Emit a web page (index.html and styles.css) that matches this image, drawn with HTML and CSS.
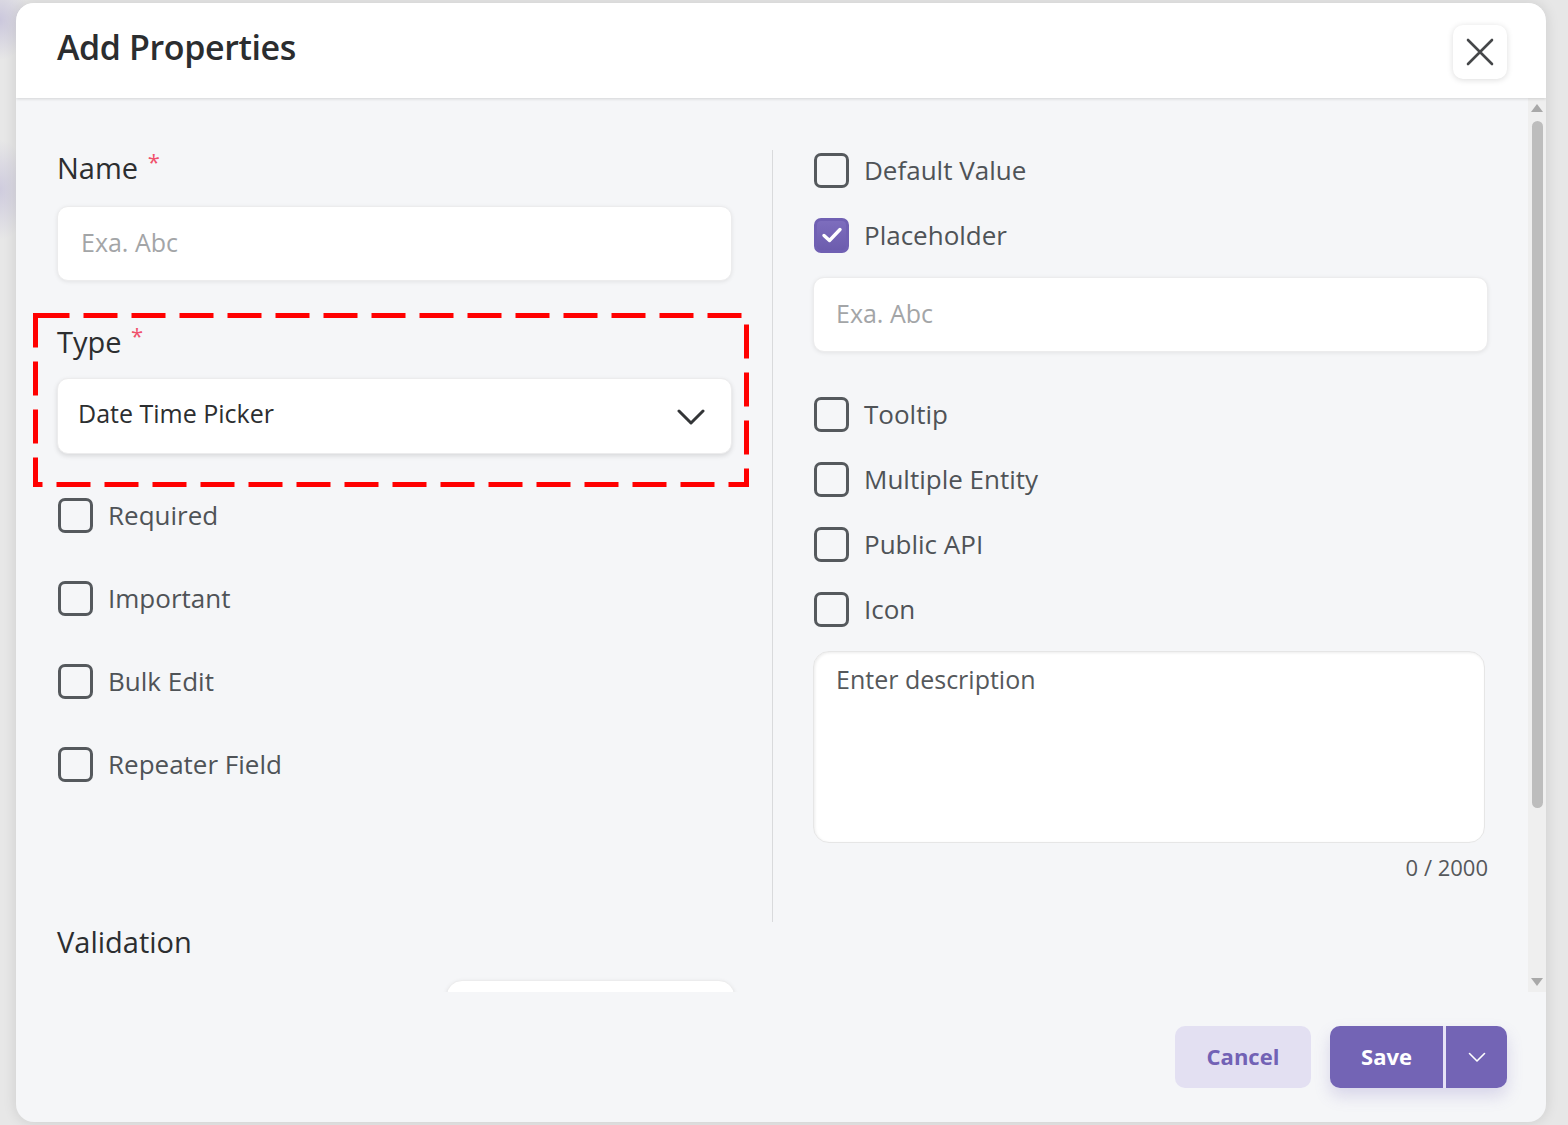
FILE: index.html
```html
<!DOCTYPE html>
<html lang="en">
<head>
  <meta charset="UTF-8" />
  <meta name="viewport" content="width=device-width, initial-scale=1" />
  <title>Add Properties</title>
  <link rel="stylesheet" href="styles.css">
</head>
<body>

  <div class="modal">
    <div class="modal-header">
      <h1 class="modal-title">Add Properties</h1>
      <button class="btn-close" aria-label="Close">
        <svg width="28" height="28" viewBox="0 0 28 28">
          <path d="M2 2 L26 26 M26 2 L2 26" stroke="#454749" stroke-width="2.6" stroke-linecap="round" fill="none"/>
        </svg>
      </button>
    </div>

    <div class="modal-body">
      <div class="body-content">
        <div class="form-grid">

          <!-- left column -->
          <div class="col">
            <label class="field-label">Name <span class="req">*</span></label>
            <div class="input placeholder">Exa. Abc</div>

            <div class="type-group">
              <label class="field-label">Type <span class="req">*</span></label>
              <div class="input select">
                <span>Date Time Picker</span>
                <svg width="28" height="17" viewBox="0 0 28 17">
                  <path d="M2 2 L14 14 L26 2" stroke="#333537" stroke-width="3" stroke-linecap="round" stroke-linejoin="round" fill="none"/>
                </svg>
              </div>
              <svg class="highlight" width="716" height="174" viewBox="0 0 716 174">
                <rect x="2.5" y="2.5" width="711" height="169" fill="none" stroke="#ff0000" stroke-width="5" stroke-dasharray="34 14"/>
              </svg>
            </div>

            <div class="check-list left-checks">
              <div class="check"><span class="box"></span>Required</div>
              <div class="check"><span class="box"></span>Important</div>
              <div class="check"><span class="box"></span>Bulk Edit</div>
              <div class="check"><span class="box"></span>Repeater Field</div>
            </div>
          </div>

          <div class="divider"></div>

          <!-- right column -->
          <div class="col">
            <div class="check"><span class="box"></span>Default Value</div>
            <div class="check check-gap">
              <span class="box checked">
                <svg width="22" height="18" viewBox="0 0 22 18">
                  <path d="M3 9.5 L8.5 14.5 L19 3.5" stroke="#fff" stroke-width="3.4" stroke-linecap="round" stroke-linejoin="round" fill="none"/>
                </svg>
              </span>Placeholder
            </div>
            <div class="input placeholder input-right">Exa. Abc</div>

            <div class="check tooltip-row"><span class="box"></span>Tooltip</div>
            <div class="check check-gap"><span class="box"></span>Multiple Entity</div>
            <div class="check check-gap"><span class="box"></span>Public API</div>
            <div class="check check-gap"><span class="box"></span>Icon</div>

            <div class="textarea">Enter description</div>
            <div class="counter">0 / 2000</div>
          </div>
        </div>

        <div class="validation">
          <h2 class="field-label">Validation</h2>
          <div class="validation-row">
            <div class="input small-select"></div>
          </div>
        </div>
      </div>

      <div class="scrollbar">
        <span class="sb-up"></span>
        <span class="sb-thumb"></span>
        <span class="sb-fill"></span>
        <span class="sb-down"></span>
      </div>
    </div>

    <div class="modal-footer">
      <button class="btn-cancel">Cancel</button>
      <div class="btn-split">
        <button class="btn-save">Save</button>
        <button class="btn-more" aria-label="More">
          <svg width="18" height="11" viewBox="0 0 18 11">
            <path d="M1.5 1.5 L9 9 L16.5 1.5" stroke="#fff" stroke-width="1.6" stroke-linecap="round" stroke-linejoin="round" fill="none"/>
          </svg>
        </button>
      </div>
    </div>
  </div>

</body>
</html>
```

FILE: styles.css
```css
/* Baseline */
* {
  margin: 0;
  padding: 0;
  box-sizing: border-box;
  font-family: 'Open Sans', 'Noto Sans', sans-serif;
}
body {
  height: 100vh;
  overflow: hidden;
  background:
    radial-gradient(ellipse 30px 40px at 0 20px, rgba(150,140,200,0.35), transparent),
    radial-gradient(ellipse 30px 50px at 0 190px, rgba(150,140,200,0.3), transparent),
    #e7e7e7;
}

/* Modal box */
.modal {
  margin: 3px 0 0 16px;
  width: 1530px;
  height: 1119px;
  background: #f5f6f8;
  border-radius: 18px;
  overflow: hidden;
  display: flex;
  flex-direction: column;
  box-shadow: 0 0 14px rgba(0,0,0,0.12);
}

.modal-header {
  height: 95px;
  flex-shrink: 0;
  background: #fff;
  display: flex;
  align-items: center;
  justify-content: space-between;
  padding: 0 39px 0 41px;
  box-shadow: 0 1px 3px rgba(0,0,0,0.14);
  position: relative;
  z-index: 1;
}
.modal-title {
  font-size: 34px;
  font-weight: 600;
  color: #2b2d2f;
  letter-spacing: -0.4px;
  margin-bottom: 8px;
}
.btn-close {
  width: 54px;
  height: 54px;
  border: none;
  border-radius: 10px;
  background: #fff;
  box-shadow: 0 1px 6px rgba(0,0,0,0.14);
  display: flex;
  align-items: center;
  justify-content: center;
  margin-top: 2px;
}

/* Body + scrollbar */
.modal-body {
  flex: 1;
  display: flex;
  overflow: hidden;
}
.body-content {
  flex: 1;
  padding: 52px 40px 0 41px;
}

.form-grid {
  display: grid;
  grid-template-columns: 675px 1px 675px;
  column-gap: 40px;
}
.col {
  display: flex;
  flex-direction: column;
  padding-bottom: 43px;
}
.divider {
  background: #d9dadc;
}

.field-label {
  display: block;
  font-size: 29px;
  font-weight: 500;
  line-height: 36px;
  color: #2c2e30;
  margin-bottom: 20px;
}
.req {
  color: #f0506c;
  font-size: 22px;
  vertical-align: top;
  line-height: 22px;
  margin-left: 2px;
}

.input {
  height: 75px;
  background: #fff;
  border: 1px solid #ececed;
  border-radius: 11px;
  box-shadow: 0 1px 4px rgba(0,0,0,0.08);
  display: flex;
  align-items: center;
  padding: 0 0 4px 23px;
  font-size: 25px;
  color: #2c2e30;
}
.placeholder {
  color: #a3a5a7;
}

.type-group {
  position: relative;
  margin-top: 43px;
}
.type-group .field-label {
  margin-bottom: 18px;
}
.select {
  height: 76px;
  justify-content: space-between;
  padding: 0 26px 6px 20px;
  box-shadow: 0 2px 5px rgba(0,0,0,0.12);
}
.select svg {
  margin-top: 8px;
}
/* red dashed annotation round the type field */
.highlight {
  position: absolute;
  left: -24px;
  top: -11px;
}

/* Checkboxes */
.check-list {
  display: flex;
  flex-direction: column;
  gap: 43px;
}
.left-checks {
  margin-top: 41px;
}
.check {
  height: 40px;
  display: flex;
  align-items: center;
  gap: 15px;
  font-size: 26px;
  font-weight: 500;
  color: #4f5357;
}
.box {
  width: 35px;
  height: 35px;
  border: 3px solid #55595d;
  border-radius: 7px;
  display: flex;
  align-items: center;
  justify-content: center;
  flex-shrink: 0;
  margin-left: 1px;
}
.box.checked {
  background: linear-gradient(#7d6dbd, #6c5cae);
  border-color: #7060b3;
}
.check-gap {
  margin-top: 25px;
}
.input-right {
  margin-top: 22px;
  padding-left: 22px;
}
.tooltip-row {
  margin-top: 42px;
}

.textarea {
  margin-top: 22px;
  height: 192px;
  width: 672px;
  background: #fff;
  border: 1px solid #e6e6e6;
  border-radius: 16px;
  box-shadow: inset 1px 1px 3px rgba(0,0,0,0.08);
  padding: 10px 22px;
  font-size: 25px;
  color: #55585b;
}
.counter {
  margin-top: 12px;
  line-height: 24px;
  text-align: right;
  font-size: 22px;
  color: #55585b;
}

.validation {
  margin-top: 2px;
}
.validation .field-label {
  margin-bottom: 20px;
}
.validation-row {
  padding-left: 389px;
}
.small-select {
  width: 289px;
  border-radius: 16px;
}

.scrollbar {
  width: 19px;
  background: #efefef;
  display: flex;
  flex-direction: column;
  align-items: center;
}
.sb-up,
.sb-down {
  width: 0;
  height: 0;
  border-left: 6px solid transparent;
  border-right: 6px solid transparent;
}
.sb-up {
  border-bottom: 8px solid #a9a9a9;
  margin-top: 6px;
}
.sb-down {
  border-top: 8px solid #a9a9a9;
  margin-bottom: 6px;
}
.sb-thumb {
  width: 11px;
  height: 687px;
  margin-top: 9px;
  border-radius: 6px;
  background: #bdbdbd;
}
.sb-fill {
  flex: 1;
}

/* Footer */
.modal-footer {
  height: 130px;
  flex-shrink: 0;
  display: flex;
  align-items: center;
  justify-content: flex-end;
  gap: 19px;
  padding-right: 39px;
}
button {
  border: none;
  cursor: pointer;
}
.btn-cancel {
  width: 136px;
  height: 62px;
  border-radius: 10px;
  background: #e3e0f2;
  color: #7262b5;
  font-size: 22px;
  font-weight: 700;
  padding-bottom: 3px;
}
.btn-split {
  display: flex;
  gap: 3px;
  background: #e6e2f6;
  border-radius: 10px;
  box-shadow: 0 8px 16px rgba(114,98,181,0.22);
}
.btn-save,
.btn-more {
  height: 62px;
  background: #7364b5;
  color: #fff;
}
.btn-save {
  width: 113px;
  border-radius: 10px 0 0 10px;
  font-size: 22px;
  font-weight: 700;
  padding-bottom: 3px;
}
.btn-more {
  width: 61px;
  border-radius: 0 10px 10px 0;
  display: flex;
  align-items: center;
  justify-content: center;
}
```
